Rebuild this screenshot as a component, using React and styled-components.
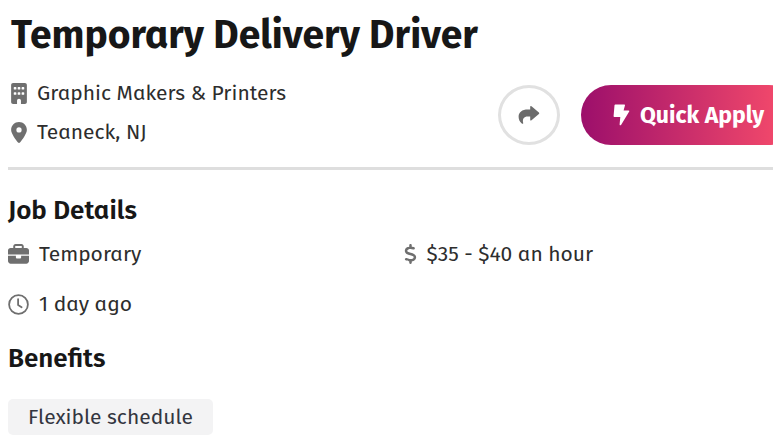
import React from "react";
import styled, { createGlobalStyle } from "styled-components";
import { FaBuilding, FaLocationDot, FaBriefcase, FaDollarSign } from "react-icons/fa6";

const GlobalStyle = createGlobalStyle`
  *, *::before, *::after { box-sizing: border-box; }
  body {
    margin: 0;
    background: #fff;
    color: #2d2d2d;
    font-family: "Fira Sans", "Noto Sans", sans-serif;
    font-feature-settings: "ss04";
    font-size: 21px;
    line-height: 28px;
    overflow-x: hidden;
  }
`;

const Page = styled.main`
  padding-left: 8px;
  margin-right: -26px;
`;

const Header = styled.header`
  padding: 11px 0 21px 3px;
`;

const Title = styled.h1`
  margin: 0;
  color: #171717;
  font-size: 39px;
  line-height: 48px;
  font-weight: 700;
  white-space: nowrap;
`;

const HeaderRow = styled.div`
  display: flex;
  justify-content: space-between;
  align-items: center;
  margin-top: 20px;
`;

const Company = styled.div`
  display: grid;
  gap: 11px;
`;

const Line = styled.div`
  display: flex;
  align-items: center;
  gap: 10px;
  white-space: nowrap;

  svg {
    flex: none;
    width: ${({ $icon }) => $icon}px;
    color: #6f6f6f;
  }
`;

const Actions = styled.div`
  display: flex;
  align-items: center;
  gap: 21px;
  margin-top: 4px;
`;

const ShareButton = styled.button`
  display: flex;
  align-items: center;
  justify-content: center;
  width: 62px;
  height: 60px;
  padding: 0;
  border: 3px solid #e1e1e1;
  border-radius: 50%;
  background: #fff;
  color: #6b6b6b;
`;

const ApplyButton = styled.button`
  display: flex;
  align-items: center;
  gap: 10px;
  width: 218px;
  height: 60px;
  padding: 0 0 0 32px;
  border: 0;
  border-radius: 30px;
  background: linear-gradient(90deg, #9c0f6b, #f1486b 90%);
  color: #fff;
  font-family: inherit;
  font-feature-settings: inherit;
  font-size: 23px;
  font-weight: 700;
  white-space: nowrap;
`;

const Body = styled.div`
  border-top: 3px solid #dedede;
  padding-top: 25px;
`;

const SectionTitle = styled.h2`
  margin: 0;
  color: #171717;
  font-size: 26px;
  line-height: 32px;
  font-weight: 600;
`;

const Details = styled.div`
  display: grid;
  grid-template-columns: 1fr 1fr;
  row-gap: 22px;
  margin: 13px 0 25px;
`;

const Tags = styled.ul`
  display: flex;
  margin: 24px 0 0;
  padding: 0;
  list-style: none;
`;

const Tag = styled.li`
  padding: 4px 20px;
  border-radius: 5px;
  background: #f3f3f4;
  color: #333640;
`;

const ShareIcon = () => (
  <svg width="22" height="20" viewBox="0 0 22 20" fill="currentColor" aria-hidden="true">
    <path d="M12.2 1.9Q12.2.3 13.5 1.2L20.9 7.6Q21.7 8.3 20.9 9L13.5 15.3Q12.2 16 12.2 14.7V11.6H10C6 11.5 4.2 13.8 5.2 17.9Q5.3 19.4 3.8 18.4C1.6 16.8.6 14.3.6 11.8C.6 7.2 4.1 4.6 9.8 4.6H12.2Z" />
  </svg>
);

const BoltIcon = () => (
  <svg width="17" height="22" viewBox="0 0 17 22" fill="currentColor" aria-hidden="true">
    <path d="M2.4.5H11.3Q12.2.5 12 1.3L10.6 6.4H15.5Q16.7 6.5 16.2 7.6L8.2 20.7Q7 22.1 6.6 20.4L7.3 12.9H1.3Q.5 12.8.6 12L1.5 1.3Q1.6.5 2.4.5Z" />
  </svg>
);

const ClockIcon = () => (
  <svg width="21" height="21" viewBox="0 0 21 21" fill="none" stroke="currentColor" strokeWidth="1.8" strokeLinecap="round" strokeLinejoin="round" aria-hidden="true">
    <circle cx="10.5" cy="10.5" r="9.4" />
    <path d="M10.1 5.1V11L13.6 13.2" />
  </svg>
);

export default function App() {
  return (
    <>
      <GlobalStyle />
      <Page>
        <Header>
          <Title>Temporary Delivery Driver</Title>
          <HeaderRow>
            <Company>
              <Line $icon={16}><FaBuilding size={21} />Graphic Makers &amp; Printers</Line>
              <Line $icon={16}><FaLocationDot size={21} />Teaneck, NJ</Line>
            </Company>
            <Actions>
              <ShareButton type="button" aria-label="Share"><ShareIcon /></ShareButton>
              <ApplyButton type="button"><BoltIcon />Quick Apply</ApplyButton>
            </Actions>
          </HeaderRow>
        </Header>
        <Body>
          <SectionTitle>Job Details</SectionTitle>
          <Details>
            <Line $icon={21}><FaBriefcase size={21} />Temporary</Line>
            <Line $icon={13}><FaDollarSign size={20} />$35 - $40 an hour</Line>
            <Line $icon={21}><ClockIcon />1 day ago</Line>
          </Details>
          <SectionTitle>Benefits</SectionTitle>
          <Tags><Tag>Flexible schedule</Tag></Tags>
        </Body>
      </Page>
    </>
  );
}
